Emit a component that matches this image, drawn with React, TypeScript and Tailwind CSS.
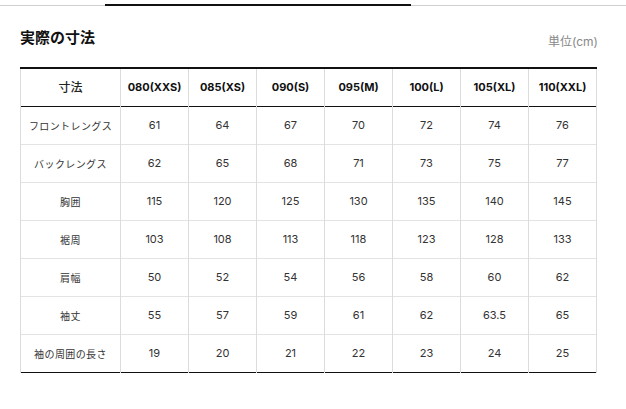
const headers = ["080(XXS)", "085(XS)", "090(S)", "095(M)", "100(L)", "105(XL)", "110(XXL)"];

const rows: { label: string; values: string[] }[] = [
  { label: "フロントレングス", values: ["61", "64", "67", "70", "72", "74", "76"] },
  { label: "バックレングス", values: ["62", "65", "68", "71", "73", "75", "77"] },
  { label: "胸囲", values: ["115", "120", "125", "130", "135", "140", "145"] },
  { label: "裾周", values: ["103", "108", "113", "118", "123", "128", "133"] },
  { label: "肩幅", values: ["50", "52", "54", "56", "58", "60", "62"] },
  { label: "袖丈", values: ["55", "57", "59", "61", "62", "63.5", "65"] },
  { label: "袖の周囲の長さ", values: ["19", "20", "21", "22", "23", "24", "25"] },
];

const jp = "font-['Noto_Sans_CJK_JP',sans-serif]";
const num = "font-['Inter','Noto_Sans_CJK_JP',sans-serif]";

export default function App() {
  return (
    <div className="h-[409px] w-[626px] overflow-hidden bg-white">
      {/* tab indicator */}
      <div className="mt-[4px] flex h-[2px]">
        <div className="w-[105px] border-b border-[#cfcfcf]" />
        <div className="w-[306px] bg-[#111]" />
        <div className="flex-1 border-b border-[#cfcfcf]" />
      </div>

      <div className="flex items-start justify-between pl-[20px] pr-[28px] pt-[21px]">
        <h2 className={`${jp} text-[15px] font-bold leading-[20px] text-[#111]`}>実際の寸法</h2>
        <span className={`${num} pt-[5px] text-[12px] leading-[20px] text-[#888]`}>単位(cm)</span>
      </div>

      <table className="ml-[20px] mt-[15px] w-[577px] table-fixed border-collapse">
        <colgroup>
          <col className="w-[100px]" />
          {headers.map((h) => (
            <col key={h} className="w-[68px]" />
          ))}
        </colgroup>
        <thead>
          <tr className="h-[38px] border-t-2 border-b border-t-[#111] border-b-[#111]">
            <th className={`${jp} border-x border-x-[#dcdcdc] text-[12px] font-medium text-[#222]`}>寸法</th>
            {headers.map((h) => (
              <th key={h} className={`${num} border-x border-x-[#dcdcdc] text-[11px] font-bold text-[#111]`}>
                {h}
              </th>
            ))}
          </tr>
        </thead>
        <tbody>
          {rows.map((r, i) => (
            <tr
              key={r.label}
              className={`h-[38px] ${i === rows.length - 1 ? "border-b border-b-[#111]" : "border-b border-b-[#e3e3e3]"}`}
            >
              <td className={`${jp} border-x border-x-[#dcdcdc] text-center text-[10px] tracking-[0.4px] text-[#333]`}>
                {r.label}
              </td>
              {r.values.map((v, j) => (
                <td key={j} className={`${num} border-x border-x-[#dcdcdc] text-center text-[11px] text-[#333]`}>
                  {v}
                </td>
              ))}
            </tr>
          ))}
        </tbody>
      </table>
    </div>
  );
}
